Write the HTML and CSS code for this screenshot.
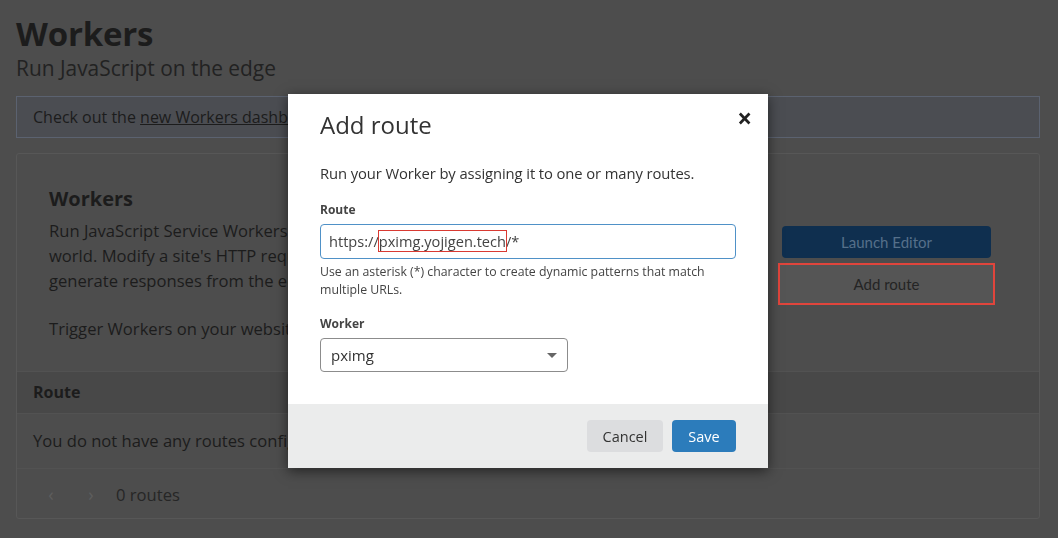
FILE: index.html
```html
<!DOCTYPE html>
<html lang="en">
<head>
    <meta charset="UTF-8">
    <title>Workers - Add route</title>
    <link rel="stylesheet" href="styles.css">
</head>
<body>
    <div class="page">
        <div class="page-header">
            <h1>Workers</h1>
            <div class="subtitle">Run JavaScript on the edge</div>
        </div>

        <div class="notice">
            Check out the <a href="#">new Workers dashboard</a> to manage your scripts and see the limits of your plan.
        </div>

        <div class="card">
            <div class="card-body">
                <div class="card-text">
                    <h2>Workers</h2>
                    <p>Run JavaScript Service Workers in Cloudflare's data centers around the<br>world. Modify a site's HTTP requests and responses, make parallel requests, or<br>generate responses from the edge.</p>
                    <p>Trigger Workers on your website by adding routes.</p>
                </div>
                <div class="card-actions">
                    <button class="btn btn-primary">Launch Editor</button>
                    <button class="btn btn-default marked">Add route</button>
                </div>
            </div>
            <div class="table-head">Route</div>
            <div class="table-empty">You do not have any routes configured.</div>
            <div class="pager">
                <span class="pager-arrow">&lsaquo;</span>
                <span class="pager-arrow">&rsaquo;</span>
                <span class="pager-count">0 routes</span>
            </div>
        </div>
    </div>

    <div class="overlay">
        <div class="modal">
            <div class="modal-header">
                <h3>Add route</h3>
                <span class="close">&times;</span>
            </div>
            <div class="modal-body">
                <p class="lead">Run your Worker by assigning it to one or many routes.</p>
                <label class="field-label">Route</label>
                <div class="input">https://<span class="marked-text">pximg.yojigen.tech</span>/*</div>
                <div class="help">Use an asterisk (*) character to create dynamic patterns that match multiple URLs.</div>
                <label class="field-label worker-label">Worker</label>
                <div class="select">
                    <span>pximg</span>
                    <span class="caret"></span>
                </div>
            </div>
            <div class="modal-footer">
                <button class="mbtn mbtn-cancel">Cancel</button>
                <button class="mbtn mbtn-save">Save</button>
            </div>
        </div>
    </div>
</body>
</html>
```

FILE: styles.css
```css
body {
    margin: 0;
    background: #4d4d4d;
    color: #1c1c1c;
    font-family: 'Open Sans', 'Noto Sans', sans-serif;
    width: 1058px;
    height: 538px;
    overflow: hidden;
}

.page {
    padding: 14px 18px 0 16px;
}

.page-header h1 {
    margin: 0;
    font-size: 33px;
    font-weight: 700;
    line-height: 40px;
    letter-spacing: -0.2px;
}

.subtitle {
    font-size: 20.9px;
    line-height: 28px;
    color: #222222;
}

.notice {
    margin-top: 14px;
    height: 40px;
    line-height: 40px;
    padding-left: 16px;
    border: 1px solid #5b6270;
    background: #4b4d52;
    font-size: 16px;
    white-space: nowrap;
    overflow: hidden;
}

.notice a {
    color: #1c1c1c;
}

.card {
    margin-top: 15px;
    border: 1px solid #575757;
    border-radius: 3px;
    height: 364px;
    overflow: hidden;
}

.card-body {
    display: flex;
    justify-content: space-between;
    padding: 30px 44px 0 32px;
    height: 187px;
}

.card-text h2 {
    margin: 0 0 4px 0;
    font-size: 20px;
    font-weight: 700;
    line-height: 30px;
}

.card-text p {
    margin: 0 0 23px 0;
    font-size: 16.6px;
    line-height: 25px;
    white-space: nowrap;
}

.card-actions {
    display: flex;
    flex-direction: column;
    gap: 5px;
    padding-top: 42px;
    width: 217px;
}

.btn {
    font-family: Lato, sans-serif;
    font-size: 15px;
    border-radius: 4px;
    border: none;
    height: 32px;
    margin: 0 4px;
}

.btn-primary {
    background: #0f2f4f;
    color: #56708a;
}

.btn-default {
    background: #555555;
    color: #242424;
}

.marked {
    margin: 0;
    height: 42px;
    border: 2px solid #e0453c;
    border-radius: 0;
}

.table-head {
    background: #484848;
    height: 41px;
    line-height: 41px;
    padding-left: 16px;
    font-weight: 700;
    font-size: 16px;
    border-top: 1px solid #525252;
}

.table-empty {
    padding-left: 16px;
    height: 54px;
    line-height: 54px;
    font-size: 16.6px;
    border-top: 1px solid #525252;
    border-bottom: 1px solid #525252;
}

.pager {
    display: flex;
    align-items: center;
    height: 50px;
    padding-left: 14px;
    font-size: 16.6px;
}

.pager-arrow {
    width: 40px;
    text-align: center;
    color: #5e5e5e;
    font-size: 18px;
}

.pager-count {
    margin-left: 5px;
    color: #262626;
}

.overlay {
    position: fixed;
    inset: 0;
}

.modal {
    position: absolute;
    left: 288px;
    top: 94px;
    width: 480px;
    height: 374px;
    background: #ffffff;
    box-shadow: 0 3px 12px rgba(0, 0, 0, 0.55);
    display: flex;
    flex-direction: column;
}

.modal-header {
    display: flex;
    justify-content: space-between;
    padding: 14px 16px 0 32px;
    height: 53px;
}

.modal-header h3 {
    margin: 0;
    font-size: 24px;
    font-weight: 400;
    line-height: 34px;
    color: #333333;
}

.close {
    font-size: 26px;
    font-weight: 700;
    line-height: 20px;
    color: #222222;
}

.modal-body {
    padding: 0 32px;
    flex: 1;
    color: #333333;
}

.lead {
    margin: 2px 0 18px 0;
    font-size: 14.8px;
    line-height: 20px;
    letter-spacing: -0.1px;
}

.field-label {
    display: block;
    font-size: 12px;
    font-weight: 700;
    line-height: 18px;
    color: #444444;
    margin-bottom: 5px;
}

.input {
    height: 33px;
    line-height: 33px;
    border: 1px solid #4f91c7;
    border-radius: 4px;
    padding-left: 8px;
    font-size: 14.6px;
    color: #444444;
}

.marked-text {
    outline: 1px solid #d93a32;
}

.help {
    font-size: 12.3px;
    line-height: 18px;
    margin-top: 4px;
    color: #444444;
    padding-right: 10px;
}

.worker-label {
    margin-top: 16px;
}

.select {
    box-sizing: border-box;
    width: 248px;
    height: 34px;
    border: 1px solid #8c8c8c;
    border-radius: 4px;
    display: flex;
    align-items: center;
    justify-content: space-between;
    padding: 0 10px;
    font-size: 15px;
    color: #333333;
}

.caret {
    width: 0;
    height: 0;
    border-left: 5px solid transparent;
    border-right: 5px solid transparent;
    border-top: 5px solid #666666;
}

.modal-footer {
    background: #ebecec;
    height: 64px;
    display: flex;
    justify-content: flex-end;
    align-items: center;
    gap: 9px;
    padding-right: 32px;
}

.mbtn {
    height: 32px;
    border-radius: 4px;
    border: none;
    font-family: 'Open Sans', 'Noto Sans', sans-serif;
    font-size: 14.5px;
}

.mbtn-cancel {
    background: #dcdddf;
    color: #333333;
    width: 76px;
}

.mbtn-save {
    background: #2c7cbb;
    color: #ffffff;
    width: 64px;
}
```
